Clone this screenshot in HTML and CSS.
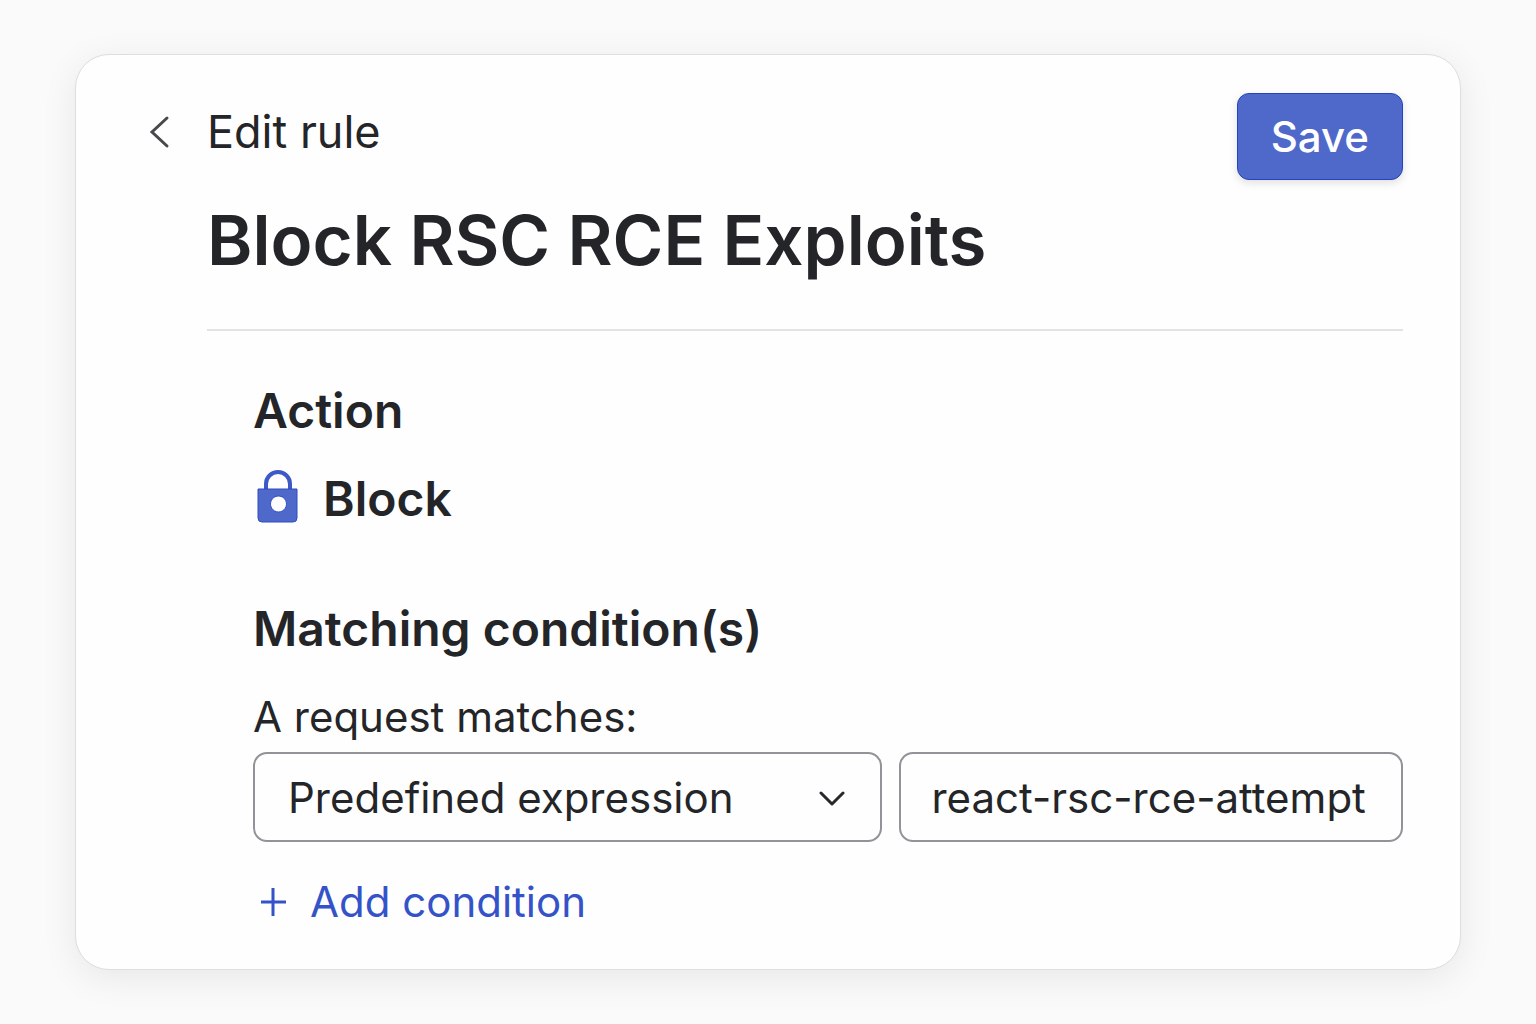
FILE: index.html
```html
<!DOCTYPE html>
<html lang="en">
<head>
    <meta charset="UTF-8">
    <meta name="viewport" content="width=device-width, initial-scale=1.0">
    <title>Edit rule</title>
    <link rel="stylesheet" href="styles.css">
</head>
<body>
    <form class="card">
        <header class="header">
            <a class="back" href="#">
                <svg class="back-icon" viewBox="0 0 24 34" width="24" height="34" aria-hidden="true">
                    <path d="M20 3 L5 17 L20 31" />
                </svg>
                <span>Edit rule</span>
            </a>
            <button class="save-btn" type="submit">Save</button>
        </header>

        <h1 class="title">Block RSC RCE Exploits</h1>

        <section class="section">
            <h2 class="heading">Action</h2>
            <div class="action">
                <svg viewBox="0 0 48 60" width="48" height="60" aria-hidden="true">
                    <path class="shackle" d="M13 22 V15 A12 12 0 0 1 37 15 V22" />
                    <path class="lock-body" fill-rule="evenodd" d="M5 20 H44 V49 Q44 53 40 53 H9 Q5 53 5 49 Z M25 27 a8 8 0 1 0 1 0 Z" />
                </svg>
                <span>Block</span>
            </div>
        </section>

        <section class="section conditions">
            <h2 class="heading">Matching condition(s)</h2>
            <label class="label" for="field">A request matches:</label>
            <div class="fields">
                <div class="select">
                    <select id="field">
                        <option>Predefined expression</option>
                    </select>
                    <svg class="chevron" viewBox="0 0 28 18" width="28" height="18" aria-hidden="true">
                        <path d="M3 5 L14 16 L25 5" />
                    </svg>
                </div>
                <input class="value" type="text" aria-label="Expression" value="react-rsc-rce-attempt">
            </div>
            <button class="add-btn" type="button">
                <svg viewBox="0 0 40 40" width="40" height="40" aria-hidden="true">
                    <path d="M8 20 H33 M20 6 V34" />
                </svg>
                <span>Add condition</span>
            </button>
        </section>
    </form>
</body>
</html>
```
FILE: styles.css
```css
* {
    box-sizing: border-box;
}
body {
    margin: 0;
    padding: 54px 75px;
    background-color: #fafafa;
    color: #242528;
    font-family: "Inter", "Liberation Sans", sans-serif;
    font-size: 42px;
}
button, input, select {
    font: inherit;
    color: inherit;
}
svg {
    flex: none;
    fill: none;
}
.card {
    padding: 38px 57px 37px 131px;
    background-color: #fefefe;
    border: 1px solid #dddde2;
    border-radius: 34px;
    box-shadow: 0 8px 36px rgba(0, 0, 0, 0.08);
}
.header {
    display: flex;
    justify-content: space-between;
    align-items: flex-start;
    margin-left: -60px;
}
.back {
    display: flex;
    align-items: center;
    gap: 36px;
    font-size: 45px;
    line-height: 78px;
    color: inherit;
    text-decoration: none;
}
.back-icon {
    stroke: #48494d;
    stroke-width: 3;
    stroke-linecap: round;
}
.save-btn {
    padding: 0 33px;
    line-height: 85px;
    font-weight: 500;
    color: #fff;
    background-color: #4f69cb;
    border: 1px solid #2443bd;
    border-radius: 12px;
    box-shadow: 0 3px 8px rgba(0, 0, 0, 0.12);
    cursor: pointer;
}
.title {
    margin: 18px 0 0;
    padding-bottom: 47px;
    font-size: 69px;
    line-height: 84px;
    font-weight: 600;
    border-bottom: 2px solid #e3e3e6;
}
.section {
    margin: 50px 0 0 46px;
}
.conditions {
    margin-top: 70px;
}
.heading {
    margin: 0;
    font-size: 48px;
    line-height: 60px;
    font-weight: 600;
}
.action {
    display: flex;
    align-items: center;
    gap: 22px;
    margin-top: 28px;
    font-size: 48px;
    line-height: 60px;
    font-weight: 600;
}
.shackle {
    stroke: #3d59c6;
    stroke-width: 4;
}
.lock-body {
    fill: #4f69cb;
    stroke: #2f4dc2;
    stroke-width: 1;
}
.label {
    display: block;
    margin-top: 33px;
    line-height: 50px;
}
.fields {
    display: grid;
    grid-template-columns: 5fr 4fr;
    gap: 17px;
    margin-top: 10px;
}
.select {
    display: grid;
    align-items: center;
}
.select select, .value {
    width: 100%;
    height: 90px;
    padding: 0 30px;
    background-color: #fefefe;
    border: 2px solid #929298;
    border-radius: 14px;
}
.select select {
    grid-area: 1 / 1;
    padding-left: 33px;
    appearance: none;
}
.chevron {
    grid-area: 1 / 1;
    justify-self: end;
    margin-right: 36px;
    stroke: #27282b;
    stroke-width: 3;
    stroke-linecap: round;
    stroke-linejoin: round;
    pointer-events: none;
}
.add-btn {
    display: flex;
    align-items: center;
    gap: 17px;
    margin-top: 30px;
    padding: 0;
    line-height: 60px;
    color: #3553c8;
    background: none;
    border: none;
    cursor: pointer;
}
.add-btn svg {
    stroke: #3553c8;
    stroke-width: 3;
}
```
